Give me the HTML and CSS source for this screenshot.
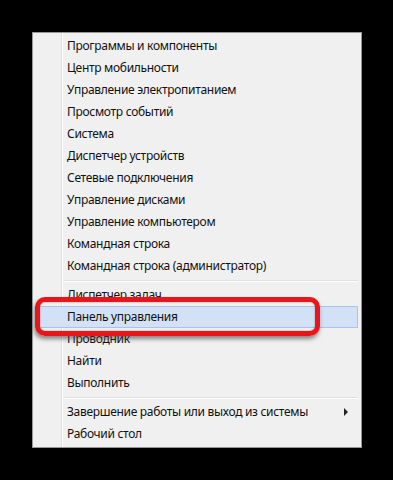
FILE: index.html
```html
<!DOCTYPE html>
<html lang="ru">
<head>
<meta charset="utf-8">
<link rel="stylesheet" href="styles.css">
</head>
<body>
<div class="menu">
  <div class="gutter"></div>
  <div class="item">Программы и компоненты</div>
  <div class="item">Центр мобильности</div>
  <div class="item">Управление электропитанием</div>
  <div class="item">Просмотр событий</div>
  <div class="item">Система</div>
  <div class="item">Диспетчер устройств</div>
  <div class="item">Сетевые подключения</div>
  <div class="item">Управление дисками</div>
  <div class="item">Управление компьютером</div>
  <div class="item">Командная строка</div>
  <div class="item">Командная строка (администратор)</div>
  <div class="sep"></div>
  <div class="item">Диспетчер задач</div>
  <div class="item active">Панель управления</div>
  <div class="item">Проводник</div>
  <div class="item">Найти</div>
  <div class="item">Выполнить</div>
  <div class="sep"></div>
  <div class="item sub">Завершение работы или выход из системы<span class="arrow"></span></div>
  <div class="item">Рабочий стол</div>
  <div class="mark"></div>
</div>
</body>
</html>
```
FILE: styles.css
```css
html, body {
  margin: 0;
  padding: 0;
  background: #000;
  height: 480px;
  overflow: hidden;
}
body {
  padding: 32px 0 0 32px;
  box-sizing: border-box;
  font-family: "Noto Sans", "Open Sans", sans-serif;
  font-size: 12px;
  letter-spacing: -0.3px;
  color: #111;
}
.menu {
  position: relative;
  width: 330px;
  box-sizing: border-box;
  border: 1px solid #979797;
  background: #f0f0f0;
  padding: 2px 3px 2px 2px;
  display: flex;
  flex-direction: column;
}
.gutter {
  position: absolute;
  top: 0;
  bottom: 0;
  left: 28px;
  width: 1px;
  background: #e0e0e0;
  border-right: 1px solid #fff;
}
.item {
  position: relative;
  height: 22px;
  line-height: 22px;
  padding-left: 32px;
  white-space: nowrap;
  box-sizing: border-box;
}
.item.active {
  background: #d2e1f6;
  border: 1px solid #a9c4e9;
  line-height: 20px;
  padding-left: 31px;
}
.sep {
  height: 7px;
  margin-left: 29px;
  position: relative;
}
.sep::before {
  content: "";
  position: absolute;
  left: 0;
  right: 0;
  top: 3px;
  height: 1px;
  background: #e0e0e0;
  border-bottom: 1px solid #fff;
}
.arrow {
  position: absolute;
  right: 10px;
  top: 7px;
  width: 0;
  height: 0;
  border-left: 4px solid #222;
  border-top: 4px solid transparent;
  border-bottom: 4px solid transparent;
}
.mark {
  position: absolute;
  left: 2px;
  top: 264px;
  width: 285px;
  height: 39px;
  box-sizing: border-box;
  border: 5px solid #e8151b;
  border-radius: 10px;
  box-shadow: -1px 3px 4px rgba(60, 60, 60, 0.6), inset 0 0 2px rgba(120, 0, 0, 0.4);
}
```
